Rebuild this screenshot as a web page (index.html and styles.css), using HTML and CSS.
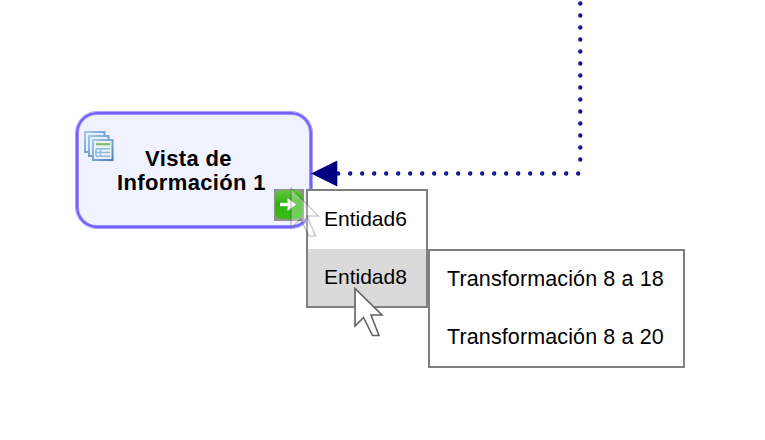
FILE: index.html
```html
<!DOCTYPE html>
<html lang="es">
<head>
<meta charset="utf-8">
<title>Diagrama</title>
<link rel="stylesheet" href="styles.css">
</head>
<body>
<main class="canvas">
  <svg class="connector" width="765" height="440" viewBox="0 0 765 440">
    <path class="dots" d="M580.3 3.5V160M578.2 173.5H337"/>
  </svg>
  <section class="node">
    <svg class="node-icon" width="32" height="32" viewBox="0 0 32 32">
      <defs>
        <linearGradient id="sheet" x2="1" y2="1"><stop stop-color="#a5c7ea"/><stop offset="1" stop-color="#4a82c2"/></linearGradient>
      </defs>
      <g fill="#e6f1fb" stroke="url(#sheet)" stroke-width="2">
        <rect x="2" y="2" width="19.5" height="20"/>
        <rect x="6" y="6" width="19.5" height="20"/>
        <rect x="10" y="10" width="19.5" height="20"/>
      </g>
      <path d="M13 14.2h14" stroke="#82bd70" stroke-width="2.2"/>
      <path d="M13 18.8h14M13 22.5h14M13 26.2h14M17.5 19v7M13 19v7" fill="none" stroke="#92b9df" stroke-width="1.5"/>
    </svg>
    <p class="node-label"><span class="first-line">Vista de</span><br>Información 1</p>
  </section>
  <svg class="connector" width="765" height="440" viewBox="0 0 765 440">
    <path class="arrowhead" d="M311 173.5L337.3 160.5V186.5Z"/>
  </svg>
  <svg class="go-button" width="30" height="32" viewBox="0 0 30 32">
    <defs>
      <linearGradient id="green" x2="0" y2="1"><stop stop-color="#6cc444"/><stop offset=".45" stop-color="#30b414"/><stop offset="1" stop-color="#35bd16"/></linearGradient>
    </defs>
    <rect x="0" y="0" width="30" height="32" fill="#909090"/>
    <rect x="1.2" y="1" width="27.4" height="29" rx="6" fill="url(#green)"/>
    <path d="M6 15.5h12" fill="none" stroke="#fff" stroke-width="3.4"/>
    <path d="M13.5 9l8.5 6.5l-8.5 6.5v-4l3-2.5l-3-2.5z" fill="#fff"/>
  </svg>
  <ul class="menu entities">
    <li>Entidad6</li>
    <li class="active">Entidad8</li>
  </ul>
  <ul class="menu transforms">
    <li>Transformación 8 a 18</li>
    <li>Transformación 8 a 20</li>
  </ul>
  <svg class="pointer ghost" width="30" height="52" viewBox="0 0 30 52"><path d="M1 1V41L10.5 32L19 49H25.5L17 29H28.5Z"/></svg>
  <svg class="pointer" width="30" height="52" viewBox="0 0 30 52"><path d="M1 1.5V39L9.5 30.5L18.5 48.5H25L17 28H28Z"/></svg>
</main>
</body>
</html>
```

FILE: styles.css
```css
body {
  margin: 0;
  background: #fff;
  font-family: "Liberation Sans", Arial, sans-serif;
  color: #000;
}

.canvas {
  position: relative;
  width: 765px;
  height: 440px;
  overflow: hidden;
}

.connector {
  position: absolute;
  inset: 0;
}

.dots {
  fill: none;
  stroke: #15158c;
  stroke-width: 4.4;
  stroke-linecap: round;
  stroke-dasharray: 0 12;
}

.arrowhead {
  fill: #000080;
}

.node {
  position: absolute;
  left: 75px;
  top: 111px;
  width: 238px;
  height: 118px;
  box-sizing: border-box;
  border: 1px solid #aaa0fd;
  border-radius: 22px;
  background: #f0f2ff;
  box-shadow: inset 0 0 0 2px #7460ff, inset 0 0 0 3px #9c90fd;
}

.node-icon {
  position: absolute;
  left: 7px;
  top: 18px;
}

.node-label {
  margin: 35px 0 0;
  padding-right: 5px;
  font-size: 22px;
  font-weight: bold;
  line-height: 24px;
  letter-spacing: 0.35px;
  text-align: center;
}

.first-line {
  padding-right: 6px;
}

.go-button {
  position: absolute;
  left: 274px;
  top: 189px;
}

.menu {
  position: absolute;
  box-sizing: border-box;
  height: 119px;
  margin: 0;
  padding: 0;
  border: 2px solid #808080;
  background: #fff;
  list-style: none;
  font-size: 21px;
  line-height: 55px;
  white-space: nowrap;
}

.menu li {
  height: 58px;
  padding-left: 16px;
}

.menu .active {
  height: 57px;
  background: #dadada;
}

.entities {
  left: 306px;
  top: 189px;
  width: 122px;
}

.transforms {
  left: 428px;
  top: 249px;
  width: 257px;
  font-size: 21.5px;
  line-height: 57px;
  letter-spacing: 0.12px;
}

.transforms li {
  padding-left: 17px;
}

.pointer {
  position: absolute;
  left: 354px;
  top: 287px;
  fill: #fff;
  stroke: #606060;
  stroke-width: 1.6;
}

.ghost {
  left: 290px;
  top: 187px;
  opacity: 0.3;
}
```
